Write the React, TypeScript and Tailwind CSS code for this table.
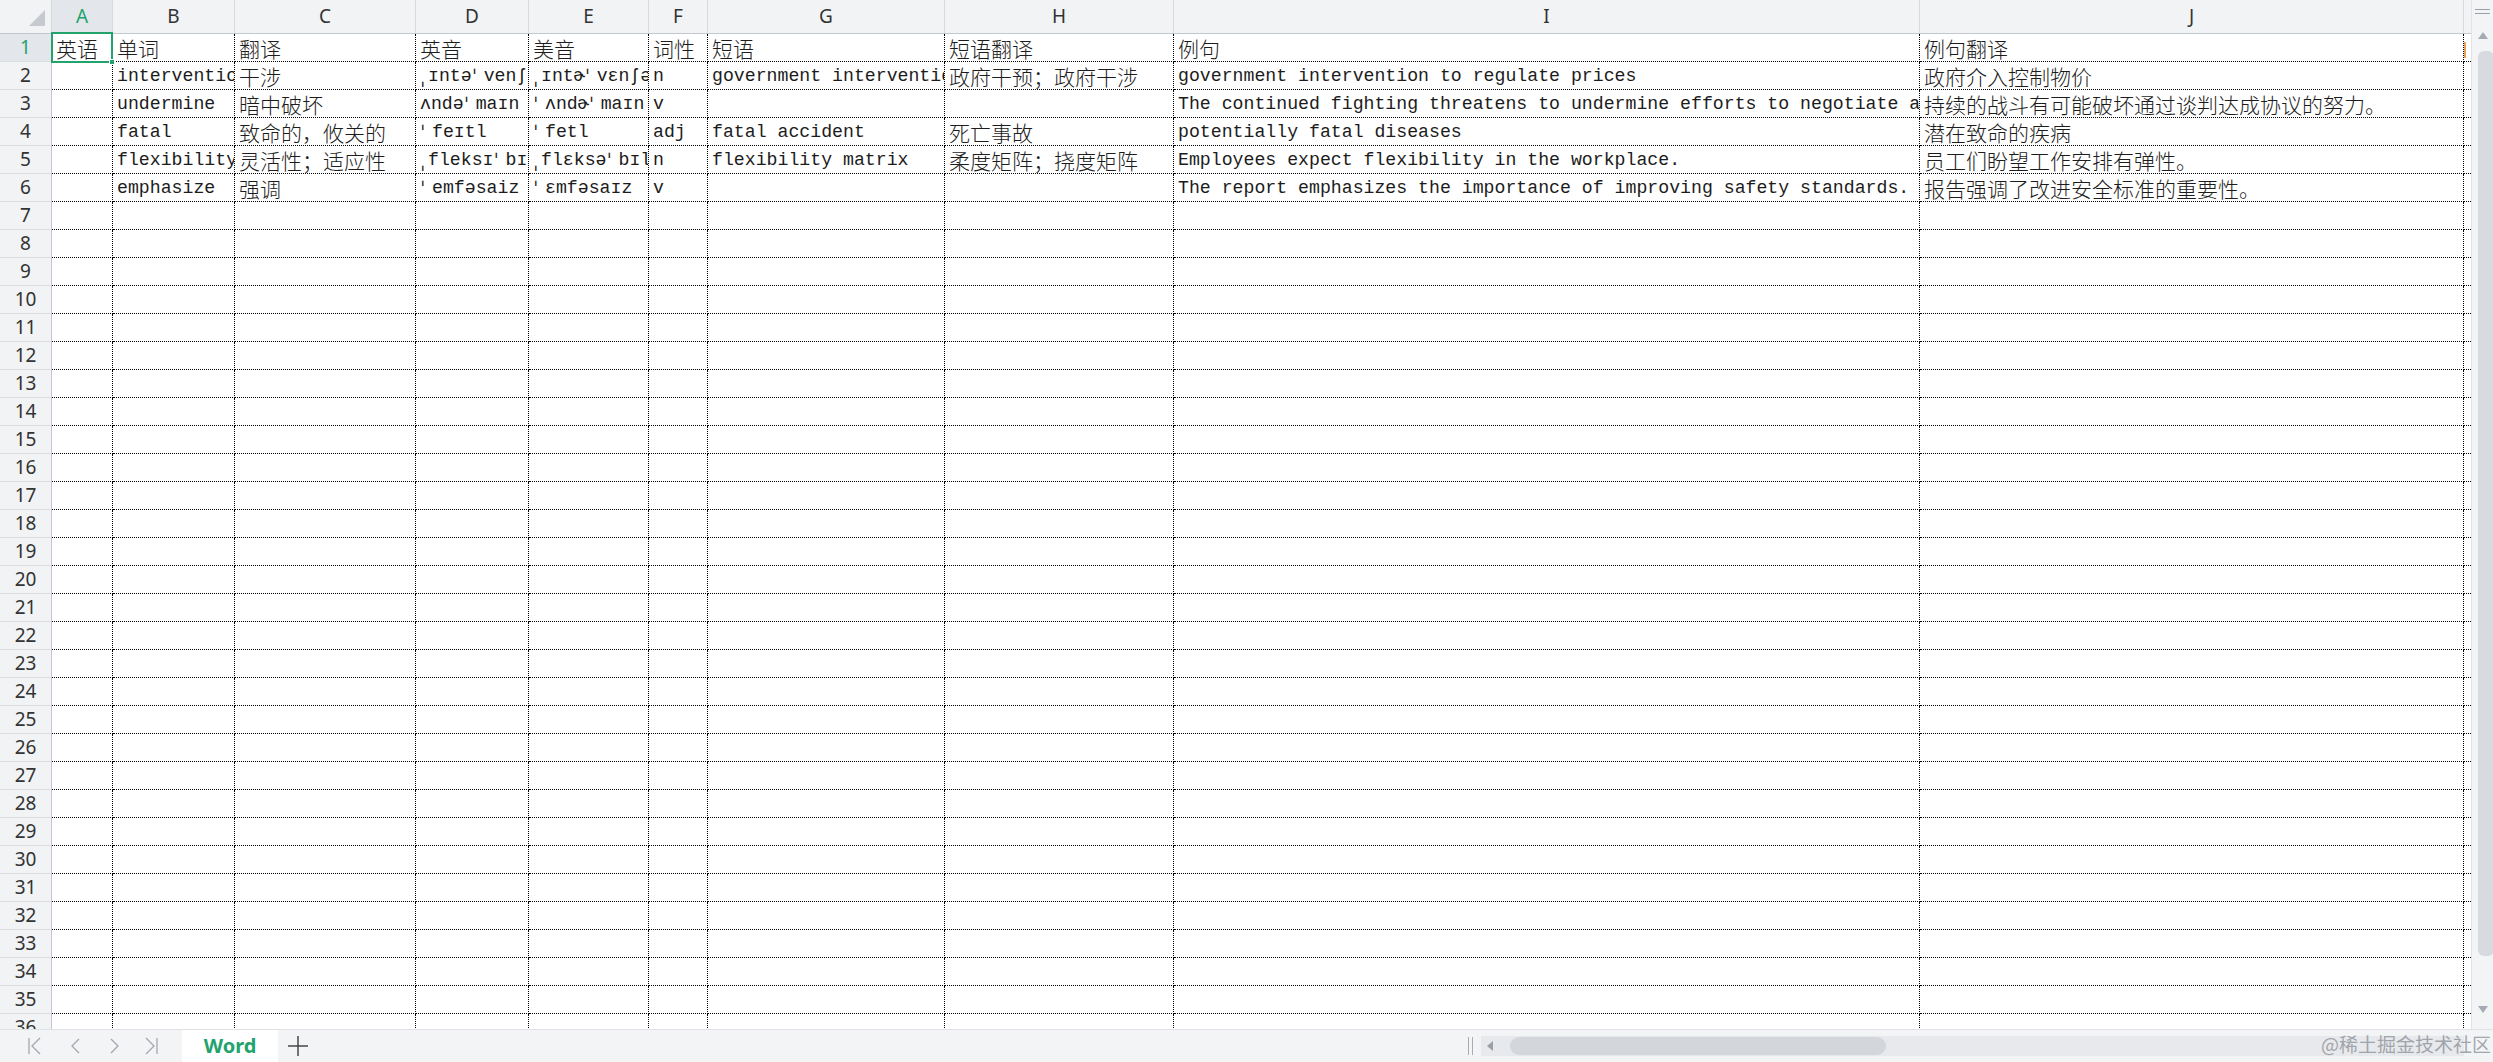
import React from "react";

type Col = { key: string; w: string };

const COLS: Col[] = [
  { key: "A", w: "w-[61px]" },
  { key: "B", w: "w-[122px]" },
  { key: "C", w: "w-[181px]" },
  { key: "D", w: "w-[113px]" },
  { key: "E", w: "w-[120px]" },
  { key: "F", w: "w-[59px]" },
  { key: "G", w: "w-[237px]" },
  { key: "H", w: "w-[229px]" },
  { key: "I", w: "w-[746px]" },
  { key: "J", w: "w-[544px]" },
];

const DATA: string[][] = [
  ["英语", "单词", "翻译", "英音", "美音", "词性", "短语", "短语翻译", "例句", "例句翻译"],
  [
    "",
    "intervention",
    "干涉",
    "ˌɪntəˈvenʃn",
    "ˌɪntɚˈvɛnʃən",
    "n",
    "government intervention",
    "政府干预；政府干涉",
    "government intervention to regulate prices",
    "政府介入控制物价",
  ],
  [
    "",
    "undermine",
    "暗中破坏",
    "ʌndəˈmaɪn",
    "ˈʌndɚˈmaɪn",
    "v",
    "",
    "",
    "The continued fighting threatens to undermine efforts to negotiate an agreement.",
    "持续的战斗有可能破坏通过谈判达成协议的努力。",
  ],
  [
    "",
    "fatal",
    "致命的，攸关的",
    "ˈfeɪtl",
    "ˈfetl",
    "adj",
    "fatal accident",
    "死亡事故",
    "potentially fatal diseases",
    "潜在致命的疾病",
  ],
  [
    "",
    "flexibility",
    "灵活性；适应性",
    "ˌfleksɪˈbɪləti",
    "ˌflɛksəˈbɪləti",
    "n",
    "flexibility matrix",
    "柔度矩阵；挠度矩阵",
    "Employees expect flexibility in the workplace.",
    "员工们盼望工作安排有弹性。",
  ],
  [
    "",
    "emphasize",
    "强调",
    "ˈemfəsaiz",
    "ˈɛmfəsaɪz",
    "v",
    "",
    "",
    "The report emphasizes the importance of improving safety standards.",
    "报告强调了改进安全标准的重要性。",
  ],
];

const ROW_COUNT = 36;
const SPLIT = /([\u2e80-\u9fff\u3000-\u303f\uff00-\uffef]+|[ˈˌ])/;
const CJK = /[\u2e80-\u9fff\u3000-\u303f\uff00-\uffef]/;

function CellText({ value }: { value: string }) {
  const parts = value.split(SPLIT).filter(Boolean);
  return (
    <>
      {parts.map((p, i) => {
        if (p === "ˈ" || p === "ˌ") {
          // stress marks are drawn a little wider in the sheet
          return (
            <span
              key={i}
              className={`inline-block shrink-0 font-['DejaVu_Sans',sans-serif] text-[20px] ${
                p === "ˈ" ? "w-[12px]" : "w-[8px]"
              }`}
            >
              {p}
            </span>
          );
        }
        return CJK.test(p) ? (
          <span key={i} className="font-['Noto_Sans_CJK_SC',sans-serif] text-[21px] font-light">
            {p}
          </span>
        ) : (
          <span key={i} className="font-['Liberation_Mono','DejaVu_Sans_Mono',monospace] text-[18.2px]">
            {p}
          </span>
        );
      })}
    </>
  );
}

function HeaderRow() {
  return (
    <div className="flex h-[34px] shrink-0 border-b border-[#c3c7ce] bg-[#f2f3f5]">
      <div className="relative w-[52px] shrink-0 border-r border-[#d6d9de]">
        <svg className="absolute left-[29px] top-[10px]" width="16" height="16" viewBox="0 0 16 16">
          <polygon points="16,0 16,16 0,16" fill="#c6cad0" />
        </svg>
      </div>
      {COLS.map((c) => (
        <div
          key={c.key}
          className={`${c.w} shrink-0 flex items-center justify-center border-r border-[#d6d9de] font-['Noto_Sans',sans-serif] text-[19px] ${
            c.key === "A" ? "bg-[#e3e6ea] text-[#21a36b]" : "text-[#333]"
          }`}
        >
          {c.key}
        </div>
      ))}
      <div className="flex-1" />
    </div>
  );
}

function Row({ index }: { index: number }) {
  const values = DATA[index] ?? [];
  const selected = index === 0;
  return (
    <div className="flex h-[28px] shrink-0">
      <div
        className={`w-[52px] shrink-0 flex items-center justify-center border-r border-b border-r-[#c3c7ce] border-b-[#dadde2] font-['Noto_Sans',sans-serif] text-[19px] ${
          selected ? "bg-[#e3e6ea] text-[#21a36b]" : "bg-[#f2f3f5] text-[#333]"
        }`}
      >
        {index + 1}
      </div>
      {COLS.map((c, ci) => (
        <div
          key={c.key}
          className={`${c.w} shrink-0 flex items-center overflow-hidden whitespace-nowrap pl-[4px] pt-[3px] border-r border-b border-dotted border-black text-[#1c1c1c]`}
        >
          {values[ci] ? <CellText value={values[ci]} /> : null}
        </div>
      ))}
      <div className="relative flex-1 border-b border-dotted border-black">
        {index === 0 ? <div className="absolute left-0 top-[8px] h-[16px] w-[2px] bg-[#e8a35a]" /> : null}
      </div>
    </div>
  );
}

function VerticalScrollbar() {
  return (
    <div className="relative w-[22px] shrink-0 flex flex-col items-center border-l border-[#e1e3e7] bg-[#f3f4f6]">
      <div className="mt-[9px] flex flex-col gap-[3px]">
        <div className="h-[1px] w-[15px] bg-[#9aa0a8]" />
        <div className="h-[1px] w-[15px] bg-[#9aa0a8]" />
      </div>
      <svg className="mt-[18px]" width="10" height="7" viewBox="0 0 10 7">
        <polygon points="5,0 10,7 0,7" fill="#a6abb3" />
      </svg>
      <div className="mt-[12px] ml-[6px] h-[905px] w-[16px] rounded-[6px] bg-[#d7dade]" />
      <svg className="mt-[50px]" width="10" height="7" viewBox="0 0 10 7">
        <polygon points="0,0 10,0 5,7" fill="#a6abb3" />
      </svg>
    </div>
  );
}

function NavIcon({ kind }: { kind: "first" | "prev" | "next" | "last" }) {
  return (
    <svg width="16" height="18" viewBox="0 0 16 18" fill="none" stroke="#a3a7ad" strokeWidth="1.3">
      {kind === "first" ? (
        <>
          <line x1="2" y1="1" x2="2" y2="17" />
          <polyline points="13,1 5,9 13,17" />
        </>
      ) : null}
      {kind === "prev" ? <polyline points="11,2 4,9 11,16" /> : null}
      {kind === "next" ? <polyline points="5,2 12,9 5,16" /> : null}
      {kind === "last" ? (
        <>
          <polyline points="3,1 11,9 3,17" />
          <line x1="14" y1="1" x2="14" y2="17" />
        </>
      ) : null}
    </svg>
  );
}

function SheetBar() {
  return (
    <div className="flex h-[33px] shrink-0 items-stretch border-t border-[#dfe1e5] bg-[#f3f4f6]">
      <div className="flex w-[182px] shrink-0 items-center pl-[27px]">
        <div className="w-[40px]">
          <NavIcon kind="first" />
        </div>
        <div className="w-[39px] pl-[1px]">
          <NavIcon kind="prev" />
        </div>
        <div className="w-[37px]">
          <NavIcon kind="next" />
        </div>
        <div>
          <NavIcon kind="last" />
        </div>
      </div>
      <div className="flex w-[96px] shrink-0 items-center justify-center bg-white font-['Noto_Sans',sans-serif] text-[20px] font-bold text-[#21a36b]">
        Word
      </div>
      <div className="flex w-[40px] items-center justify-center">
        <svg width="22" height="22" viewBox="0 0 22 22" stroke="#3c3c3c" strokeWidth="1.4">
          <line x1="11" y1="1" x2="11" y2="21" />
          <line x1="1" y1="11" x2="21" y2="11" />
        </svg>
      </div>
      <div className="flex-1" />
      <div className="flex w-[1025px] shrink-0 items-center">
        <div className="flex h-[18px] gap-[3px]">
          <div className="w-[1px] bg-[#a9adb3]" />
          <div className="w-[1px] bg-[#a9adb3]" />
        </div>
        <div className="ml-[8px] flex h-[20px] flex-1 items-center bg-[#e8e9ec]">
          <svg className="ml-[6px]" width="6" height="10" viewBox="0 0 6 10">
            <polygon points="6,0 6,10 0,5" fill="#9ba0a7" />
          </svg>
          <div className="ml-[17px] h-[18px] w-[376px] rounded-full bg-[#d3d6da]" />
        </div>
        <div className="w-[29px]" />
      </div>
      <div className="absolute right-[2px] bottom-[4px] font-['Noto_Sans_CJK_SC',sans-serif] text-[19px] text-[#8f949b] opacity-80">
        @稀土掘金技术社区
      </div>
    </div>
  );
}

export default function App() {
  return (
    <div className="relative flex h-[1062px] w-[2493px] flex-col overflow-hidden bg-white">
      <div className="flex h-[1029px] shrink-0">
        <div className="relative flex flex-1 flex-col overflow-hidden">
          <HeaderRow />
          {Array.from({ length: ROW_COUNT }, (_, i) => (
            <Row key={i} index={i} />
          ))}
          <div className="absolute left-[51px] top-[32px] h-[31px] w-[62px] border-2 border-[#21a36b]" />
          <div className="absolute left-[109px] top-[59px] h-[6px] w-[6px] border border-white bg-[#21a36b]" />
        </div>
        <VerticalScrollbar />
      </div>
      <SheetBar />
    </div>
  );
}
